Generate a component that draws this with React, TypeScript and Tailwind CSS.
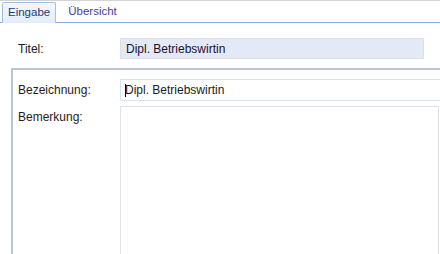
export default function App() {
  return (
    <div className="w-[440px] h-[254px] overflow-hidden bg-white text-[12px] text-[#1a1a1a] [font-family:'Liberation_Sans',Arial,sans-serif]">
      {/* Tab strip */}
      <div className="border-t border-[#d4d4d4] h-[23px] flex items-end pl-[2px] border-b border-b-[#84b0e4] text-[11.5px]">
        <div className="h-[21px] px-[5px] flex items-center border border-b-0 border-[#9ec1e6] rounded-t-[2px] bg-gradient-to-b from-[#f3f8fd] to-[#e3edf9] text-[#1c3b78] -mb-px relative">
          Eingabe
        </div>
        <div className="h-[21px] pl-[12px] flex items-center text-[#4b3b9c]">Übersicht</div>
      </div>

      {/* Titel */}
      <div className="flex items-center mt-[15px] h-[21px]">
        <div className="w-[120px] pl-[18px]">Titel:</div>
        <div className="w-[304px] h-[21px] flex items-center pl-[5px] bg-[#e3e9f5] border border-[#dcdfe4] text-[#1a1030]">
          Dipl. Betriebswirtin
        </div>
      </div>

      {/* Group box */}
      <div className="mt-[9px] ml-[11px] h-[200px] border-t-2 border-l-2 border-[#bac4d2] pt-[9px]">
        <div className="flex items-center h-[22px]">
          <div className="w-[107px] pl-[5px] text-[#2a1a1a]">Bezeichnung:</div>
          <div className="flex-1 h-[22px] flex items-center pl-[4px] border border-r-0 border-[#d3e4f6] bg-white relative">
            <span className="w-px h-[13px] bg-black absolute left-[4px]" />
            Dipl. Betriebswirtin
          </div>
        </div>
        <div className="flex mt-[5px]">
          <div className="w-[107px] pl-[5px] pt-[2px] text-[#2a1a1a]">Bemerkung:</div>
          <div className="w-[319px] h-[160px] border border-b-0 border-[#e2e2e2] bg-white" />
        </div>
      </div>
    </div>
  )
}
